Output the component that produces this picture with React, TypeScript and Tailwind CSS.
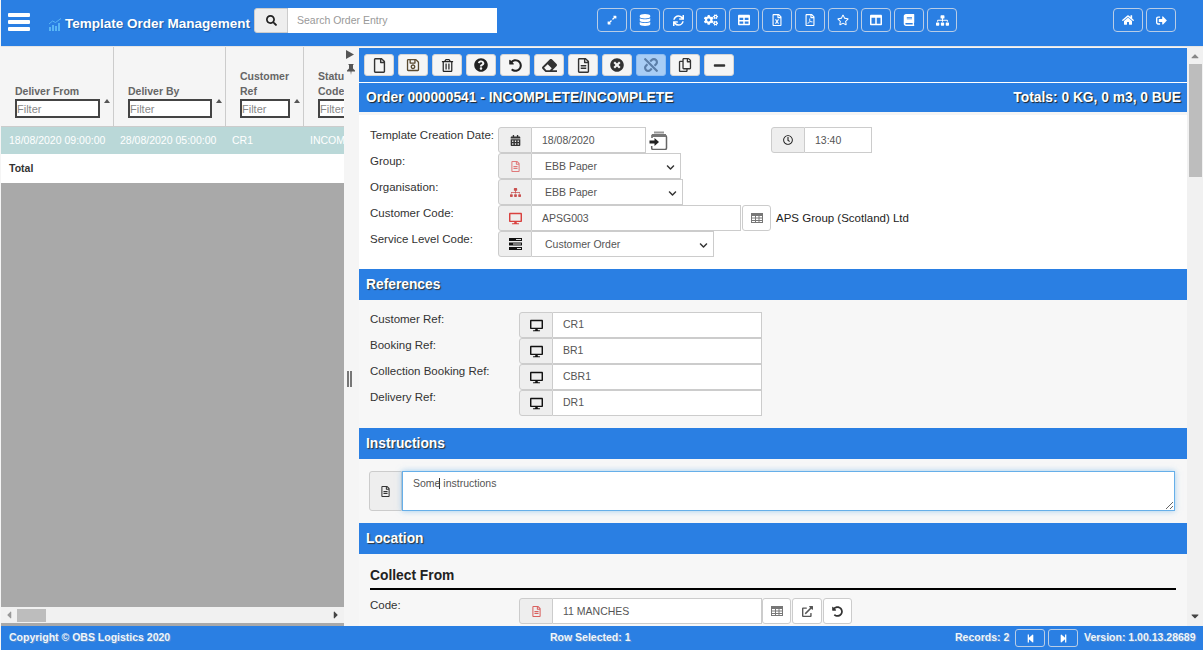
import React from "react";
import {
  FaSearch, FaExpandAlt, FaDatabase, FaSync, FaCogs, FaTable, FaRegFileExcel, FaRegFilePdf,
  FaRegStar, FaColumns, FaBook, FaSitemap, FaHome, FaSignOutAlt, FaRegFile, FaRegSave, FaRegTrashAlt,
  FaQuestionCircle, FaUndoAlt, FaEraser, FaRegFileAlt, FaTimesCircle, FaUnlink, FaRegCopy, FaMinus,
  FaCalendarAlt, FaRegClock, FaDesktop, FaChevronDown, FaExternalLinkAlt, FaStepBackward, FaStepForward,
  FaCaretUp, FaCaretDown, FaCaretLeft, FaCaretRight,
} from "react-icons/fa";

const HeadBtn = ({ icon: I, size = 12 }: { icon: any; size?: number }) => (
  <button className="flex h-[24px] w-[30px] items-center justify-center rounded-[4px] border border-[#b9cde6] bg-transparent text-white">
    <I size={size} />
  </button>
);

const ToolBtn = ({ icon: I, active, color = "#333", size = 14 }: { icon: any; active?: boolean; color?: string; size?: number }) => (
  <button className={active ? "flex h-[22px] w-[30px] items-center justify-center rounded-[3px] border border-[#8fbdf0] bg-[#a8cdf5]" : "flex h-[22px] w-[30px] items-center justify-center rounded-[3px] border border-[#d5d5d5] bg-[#f5f5f5]"}>
    <I size={size} color={color} />
  </button>
);

const Column = ({ label, width, filter, pad, caret }: { label: React.ReactNode; width: string; filter: string; pad: string; caret?: string }) => (
  <div className={`${width} ${pad} relative flex shrink-0 flex-col justify-end border-r border-[#ccc] pb-[8px]`}>
    <div className="text-[10.5px] font-bold leading-[15px] text-[#666]">{label}</div>
    <input placeholder="Filter" className={`${filter} h-[19px] border-2 border-[#444] bg-white text-[11px] outline-none placeholder:text-[#888]`} />
    {caret && (
      <svg width="6" height="4" viewBox="0 0 6 4" className={`absolute top-[52px] ${caret}`}>
        <path d="M0 4l3-4 3 4z" fill="#555" />
      </svg>
    )}
  </div>
);

const Group = ({ icon, width, text, chevron, tight }: { icon: React.ReactNode; width: string; text: string; chevron?: boolean; tight?: boolean }) => (
  <div className={`flex h-[26px] ${width} shrink-0`}>
    <div className="flex w-[34px] shrink-0 items-center justify-center rounded-l-[3px] border border-[#ccc] bg-[#eee]">{icon}</div>
    <div className={chevron ? "flex flex-1 items-center justify-between border-y border-r border-[#ccc] bg-white pl-[13px] pr-[5px] pt-[2px] text-[10.5px] text-[#555]" : tight ? "flex flex-1 items-center border-y border-r border-[#ccc] bg-white pl-[10px] text-[10.5px] text-[#555]" : "flex flex-1 items-center border-y border-r border-[#ccc] bg-white pl-[10px] pt-[2px] text-[10.5px] text-[#555]"}>
      <span>{text}</span>
      {chevron && <FaChevronDown size={9} color="#333" />}
    </div>
  </div>
);

const Row = ({ label, labelWidth, children, tight }: { label: string; labelWidth: string; children: React.ReactNode; tight?: boolean }) => (
  <div className="flex h-[26px] items-start">
    <div className={tight ? `${labelWidth} shrink-0 whitespace-nowrap text-[11.5px] leading-[14px] text-[#333]` : `${labelWidth} shrink-0 whitespace-nowrap pt-[1px] text-[11.5px] leading-[14px] text-[#333]`}>{label}</div>
    {children}
  </div>
);

const SectionBar = ({ title }: { title: string }) => (
  <div className="flex h-[31px] items-center bg-[#2a7fe3] pl-[7px] pt-[2px] text-[13.8px] font-bold text-white [text-shadow:1px_1px_1px_#333]">{title}</div>
);

const GridIcon = () => (
  <svg width="12" height="10" viewBox="0 0 12 10" fill="none" stroke="#777" strokeWidth="1">
    <rect x="0.5" y="0.5" width="11" height="9" fill="#fff" />
    <path d="M0.500 2h11" strokeWidth="2" />
    <path d="M4.500 2v7.500M8 2v7.500M.5 5h11M.5 7.500h11" />
  </svg>
);

const SmallBtn = ({ children, w = "w-[30px]" }: { children: React.ReactNode; w?: string }) => (
  <button className={`flex h-[26px] ${w} shrink-0 items-center justify-center rounded-[3px] border border-[#ccc] bg-white`}>
    {children}
  </button>
);

const Desk = <FaDesktop size={13} color="#111" />;

const ImportCal = () => (
  <svg width="19" height="19" viewBox="0 0 19 19" className="ml-[3px] mt-[4px] shrink-0">
    <path d="M3 7V4.500h13c.8 0 1.500.7 1.500 1.500v11c0 .8-.7 1.500-1.500 1.500H4c-.8 0-1.300-.7-1.300-1.500V15" fill="none" stroke="#666" strokeWidth="1.500" />
    <rect x="3" y="3" width="14" height="3" fill="#777" />
    <rect x="5" y="0.500" width="10" height="2" fill="#999" />
    <path d="M0.500 9.500h5V7l4.500 4-4.500 4v-2.500h-5z" fill="#222" />
  </svg>
);

const ServiceIcon = () => (
  <svg width="13" height="12" viewBox="0 0 13 12">
    <path d="M0 0h13v3H0zM0 4.500h13v3H0zM0 9h13v3H0z" fill="#111" />
    <path d="M7 1h5v1H7zM4 5.500h8v1H4zM8 10h4v1H8z" fill="#ddd" />
  </svg>
);

const ChartIcon = () => (
  <svg width="13" height="13" viewBox="0 0 13 13" className="ml-[19px] mt-[18px] shrink-0">
    <path d="M0 9h2v4H0zM3 7h2v6H3zM6 8h2v5H6zM9 5h2v8H9z" fill="#58b5f5" />
    <path d="M0 6l3.500-3 3 1.500L12 .5" fill="none" stroke="#58b5f5" strokeWidth="1" />
  </svg>
);

const Burger = () => (
  <svg width="22" height="18" viewBox="0 0 22 18" className="ml-[7px] mt-[13px] shrink-0">
    <path d="M1 0h20a1 1 0 0 1 1 1v2a1 1 0 0 1-1 1H1a1 1 0 0 1-1-1V1a1 1 0 0 1 1-1zM1 7h20a1 1 0 0 1 1 1v2a1 1 0 0 1-1 1H1a1 1 0 0 1-1-1V8a1 1 0 0 1 1-1zM1 14h20a1 1 0 0 1 1 1v2a1 1 0 0 1-1 1H1a1 1 0 0 1-1-1v-2a1 1 0 0 1 1-1z" fill="#fff" />
  </svg>
);

const Pin = () => (
  <svg width="8" height="11" viewBox="0 0 8 11" className="ml-[3px] mt-[5px]">
    <path d="M1.500 0h5v1H6v3.500L8 6.500V7.500H4.500L4 11l-.5-3.500H0V6.500l2-2V1h-.5z" fill="#555" />
  </svg>
);

export default function App() {
  const taRef = React.useRef<HTMLTextAreaElement>(null);
  React.useEffect(() => {
    if (taRef.current) {
      taRef.current.focus();
      taRef.current.setSelectionRange(4, 4);
    }
  }, []);
  return (
    <div className="flex h-[650px] w-[1203px] flex-col overflow-hidden bg-[#f5f5f5] pl-px font-['Liberation_Sans',Arial,sans-serif]">
      {/* header */}
      <header className="flex h-[46px] shrink-0 items-start bg-[#2a7fe3]">
        <Burger />
        <ChartIcon />
        <div className="ml-[3px] mt-[14px] w-[189px] whitespace-nowrap text-[13.5px] font-bold leading-[20px] text-white [text-shadow:1px_1px_1px_#1c5aa5]">Template Order Management</div>
        <div className="mt-[8px] flex h-[25px] w-[243px]">
          <div className="flex w-[34px] items-center justify-center rounded-l-[3px] border border-[#ccc] bg-[#eee]"><FaSearch size={11} color="#222" /></div>
          <input placeholder="Search Order Entry" className="min-w-0 flex-1 bg-white pl-[9px] pt-[1px] text-[10.5px] outline-none placeholder:text-[#999]" />
        </div>
        <div className="ml-[100px] mt-[8px] flex gap-[3px]">
          <HeadBtn icon={FaExpandAlt} size={10} />
          <HeadBtn icon={FaDatabase} size={12} />
          <HeadBtn icon={FaSync} size={11} />
          <HeadBtn icon={FaCogs} size={14} />
          <HeadBtn icon={FaTable} size={12} />
          <HeadBtn icon={FaRegFileExcel} size={12} />
          <HeadBtn icon={FaRegFilePdf} size={12} />
          <HeadBtn icon={FaRegStar} size={12} />
          <HeadBtn icon={FaColumns} size={12} />
          <HeadBtn icon={FaBook} size={12} />
          <HeadBtn icon={FaSitemap} size={13} />
        </div>
        <div className="ml-[156px] mt-[8px] flex gap-[3px]">
          <HeadBtn icon={FaHome} size={12} />
          <HeadBtn icon={FaSignOutAlt} size={11} />
        </div>
      </header>

      <main className="flex h-[580px] shrink-0 border-t border-[#e5e5e5]">
        {/* left grid */}
        <section className="flex h-full w-[343px] shrink-0 flex-col overflow-hidden bg-[#a9a9a9]">
          <div className="flex h-[80px] shrink-0 border-b border-[#ccc] bg-[#f5f5f5]">
            <Column label="Deliver From" width="w-[113px]" pad="pl-[14px]" filter="w-[85px]" caret="left-[103px]" />
            <Column label="Deliver By" width="w-[112px]" pad="pl-[14px]" filter="w-[84px]" caret="left-[102px]" />
            <Column label={<>Customer<br />Ref</>} width="w-[78px]" pad="pl-[14px]" filter="w-[50px]" caret="left-[68px]" />
            <Column label={<>Status<br />Code</>} width="w-[78px]" pad="pl-[14px]" filter="w-[50px]" />
          </div>
          <div className="flex h-[28px] shrink-0 items-center whitespace-nowrap border-b border-white bg-[#bad8d8] text-[10.5px] text-white">
            <span className="w-[112px] shrink-0 pl-[8px]">18/08/2020 09:00:00</span>
            <span className="w-[112px] shrink-0 pl-[7px]">28/08/2020 05:00:00</span>
            <span className="w-[78px] shrink-0 pl-[7px]">CR1</span>
            <span className="pl-[7px]">INCOMPLETE</span>
          </div>
          <div className="flex h-[28px] shrink-0 items-center bg-white pl-[8px] text-[10.5px] font-bold text-[#333]">Total</div>
          <div className="min-h-0 flex-1" />
          <div className="mb-[3px] flex h-[16px] shrink-0 items-center bg-[#f1f1f1] text-[#555]">
            <FaCaretLeft size={12} className="ml-[2px]" color="#999" />
            <div className="ml-[2px] h-[13px] w-[29px] bg-[#bdbdbd]" />
            <div className="flex-1" />
            <FaCaretRight size={12} color="#444" className="mr-[2px]" />
          </div>
        </section>

        {/* gutter */}
        <div className="flex h-full w-[15px] shrink-0 flex-col items-start bg-[#f5f5f5] text-[#555]">
          <svg width="8" height="9" viewBox="0 0 8 9" className="ml-[2px] mt-[3px]"><path d="M0 0l8 4.500L0 9z" fill="#555" /></svg>
          <Pin />
          <div className="ml-[3px] mt-[296px] flex gap-[1px]">
            <div className="h-[16px] w-[2px] bg-[#777]" />
            <div className="h-[16px] w-[2px] bg-[#777]" />
          </div>
        </div>

        {/* form */}
        <section className="flex h-full w-[828px] shrink-0 flex-col overflow-hidden">
          <div className="mt-[1px] flex h-[35px] shrink-0 items-start gap-[4px] border-b border-white bg-[#2a7fe3] pl-[5px] pt-[6px]">
            <ToolBtn icon={FaRegFile} color="#333" size={15} />
            <ToolBtn icon={FaRegSave} color="#5a4a30" />
            <ToolBtn icon={FaRegTrashAlt} color="#222" size={13} />
            <ToolBtn icon={FaQuestionCircle} color="#222" />
            <ToolBtn icon={FaUndoAlt} color="#222" size={13} />
            <ToolBtn icon={FaEraser} color="#333" size={15} />
            <ToolBtn icon={FaRegFileAlt} color="#333" size={15} />
            <ToolBtn icon={FaTimesCircle} color="#333" />
            <ToolBtn icon={FaUnlink} color="#5b7ea8" active />
            <ToolBtn icon={FaRegCopy} color="#333" />
            <ToolBtn icon={FaMinus} color="#333" size={13} />
          </div>
          <div className="flex h-[29px] shrink-0 items-center justify-between bg-[#2a7fe3] pl-[7px] pr-[6px] pt-[1px] text-[13.8px] font-bold text-white [text-shadow:1px_1px_1px_#222]">
            <span>Order 000000541 - INCOMPLETE/INCOMPLETE</span>
            <span>Totals: 0 KG, 0 m3, 0 BUE</span>
          </div>
          <div className="h-[157px] shrink-0 border-t-[3px] border-[#f5f5f5] bg-white pl-[11px] pt-[12px]">
            <Row label="Template Creation Date:" labelWidth="w-[128px]">
              <Group icon={<FaCalendarAlt size={11} color="#333" />} width="w-[148px]" text="18/08/2020" />
              <ImportCal />
              <div className="w-[103px] shrink-0" />
              <Group icon={<FaRegClock size={10} color="#222" />} width="w-[101px]" text="13:40" />
            </Row>
            <Row label="Group:" labelWidth="w-[128px]">
              <Group icon={<FaRegFileAlt size={11} color="#e0797a" />} width="w-[183px]" text="EBB Paper" chevron />
            </Row>
            <Row label="Organisation:" labelWidth="w-[128px]">
              <Group icon={<FaSitemap size={11} color="#c9504f" />} width="w-[185px]" text="EBB Paper" chevron />
            </Row>
            <Row label="Customer Code:" labelWidth="w-[128px]">
              <Group icon={<FaDesktop size={13} color="#d9413f" />} width="w-[243px]" text="APSG003" />
              <SmallBtn w="ml-px w-[29px]"><GridIcon /></SmallBtn>
              <div className="ml-[5px] mt-[1px] self-center text-[11.5px] text-[#222]">APS Group (Scotland) Ltd</div>
            </Row>
            <Row label="Service Level Code:" labelWidth="w-[128px]">
              <Group icon={<ServiceIcon />} width="w-[216px]" text="Customer Order" chevron />
            </Row>
          </div>
          <SectionBar title="References" />
          <div className="h-[128px] shrink-0 bg-[#f7f7f7] pl-[11px] pt-[12px]">
            <Row tight label="Customer Ref:" labelWidth="w-[149px]"><Group tight icon={Desk} width="w-[243px]" text="CR1" /></Row>
            <Row tight label="Booking Ref:" labelWidth="w-[149px]"><Group tight icon={Desk} width="w-[243px]" text="BR1" /></Row>
            <Row tight label="Collection Booking Ref:" labelWidth="w-[149px]"><Group tight icon={Desk} width="w-[243px]" text="CBR1" /></Row>
            <Row tight label="Delivery Ref:" labelWidth="w-[149px]"><Group tight icon={Desk} width="w-[243px]" text="DR1" /></Row>
          </div>
          <SectionBar title="Instructions" />
          <div className="flex h-[64px] shrink-0 bg-[#f7f7f7] pl-[10px] pt-[12px]">
            <div className="flex h-[40px] w-[33px] items-center justify-center rounded-l-[3px] border border-[#ccc] bg-[#eee]"><FaRegFileAlt size={11} color="#333" /></div>
            <div className="relative h-[40px] w-[773px]">
              <textarea
                ref={taRef}
                defaultValue="Some instructions"
                className="h-[40px] w-[773px] resize-y border border-[#66afe9] bg-white pl-[10px] pt-[4px] text-[10.5px] text-[#555] shadow-[0_0_6px_rgba(102,175,233,0.6)] outline-none"
              />
              <div className="absolute left-[37px] top-[7px] h-[11px] w-px bg-[#333]" />
            </div>
          </div>
          <SectionBar title="Location" />
          <div className="min-h-0 flex-1 bg-[#f7f7f7] pl-[11px] pr-[11px] pt-[15px]">
            <div className="border-b-2 border-black pb-[5px] text-[13.8px] font-bold leading-[14px] text-[#222]">Collect From</div>
            <div className="mt-[8px]">
              <Row tight label="Code:" labelWidth="w-[149px]">
                <Group icon={<FaRegFileAlt size={11} color="#d9605f" />} width="w-[243px]" text="11 MANCHES" />
                <SmallBtn w="w-[29px]"><GridIcon /></SmallBtn>
                <SmallBtn w="w-[30px] ml-px"><FaExternalLinkAlt size={11} color="#555" /></SmallBtn>
                <SmallBtn w="w-[29px] ml-px"><FaUndoAlt size={11} color="#333" /></SmallBtn>
              </Row>
            </div>
          </div>
        </section>

        {/* scrollbar */}
        <div className="flex h-full w-[16px] shrink-0 flex-col items-center bg-[#f1f1f1] pt-[3px] text-[#888]">
          <FaCaretUp size={12} />
          <div className="mt-[2px] h-[113px] w-[13px] bg-[#bdbdbd]" />
          <div className="flex-1" />
          <FaCaretDown size={12} color="#444" className="mb-[4px]" />
        </div>
      </main>

      {/* footer */}
      <footer className="flex h-[24px] shrink-0 items-center whitespace-nowrap bg-[#2a7fe3] pl-[8px] text-[10.5px] font-bold text-[#eef5fd] [text-shadow:1px_1px_0_#5b8fca]">
        <span className="w-[541px] shrink-0">Copyright © OBS Logistics 2020</span>
        <span className="w-[405px] shrink-0">Row Selected: 1</span>
        <span className="w-[54px] shrink-0">Records: 2</span>
        <button className="ml-[6px] flex h-[18px] w-[30px] shrink-0 items-center justify-center rounded-[3px] border border-[#b9cde6] text-white"><FaStepBackward size={9} /></button>
        <button className="ml-[3px] flex h-[18px] w-[30px] shrink-0 items-center justify-center rounded-[3px] border border-[#b9cde6] text-white"><FaStepForward size={9} /></button>
        <span className="ml-[6px]">Version: 1.00.13.28689</span>
      </footer>
    </div>
  );
}
